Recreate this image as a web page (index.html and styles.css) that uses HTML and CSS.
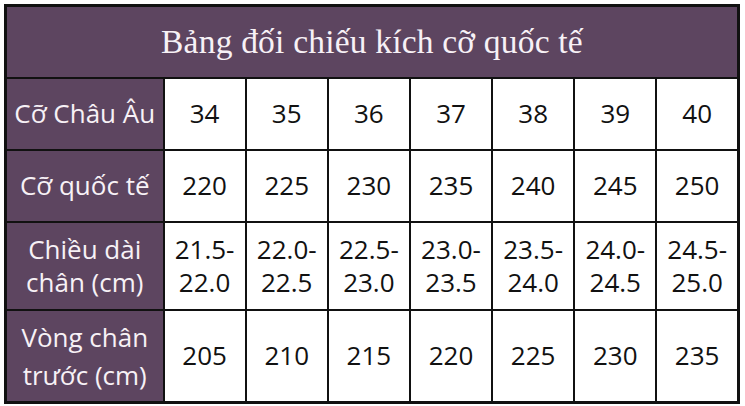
FILE: index.html
```html
<!DOCTYPE html>
<html lang="vi">
<head>
<meta charset="utf-8">
<title>Bảng đối chiếu kích cỡ quốc tế</title>
<link rel="stylesheet" href="styles.css">
</head>
<body>
<table class="size-table">
  <colgroup>
    <col class="col-head">
    <col><col><col><col><col><col><col>
  </colgroup>
  <tr class="row-title">
    <th colspan="8" class="title">Bảng đối chiếu kích cỡ quốc tế</th>
  </tr>
  <tr class="row-a">
    <th>Cỡ Châu Âu</th>
    <td>34</td><td>35</td><td>36</td><td>37</td><td>38</td><td>39</td><td>40</td>
  </tr>
  <tr class="row-a">
    <th>Cỡ quốc tế</th>
    <td>220</td><td>225</td><td>230</td><td>235</td><td>240</td><td>245</td><td>250</td>
  </tr>
  <tr class="row-b">
    <th>Chiều dài<br>chân (cm)</th>
    <td>21.5-<br>22.0</td><td>22.0-<br>22.5</td><td>22.5-<br>23.0</td><td>23.0-<br>23.5</td><td>23.5-<br>24.0</td><td>24.0-<br>24.5</td><td>24.5-<br>25.0</td>
  </tr>
  <tr class="row-c">
    <th>Vòng chân<br>trước (cm)</th>
    <td>205</td><td>210</td><td>215</td><td>220</td><td>225</td><td>230</td><td>235</td>
  </tr>
</table>
</body>
</html>
```
FILE: styles.css
```css
html, body {
  margin: 0;
  padding: 0;
  background: #ffffff;
}

.size-table {
  margin: 4px 0 0 4px;
  width: 736px;
  table-layout: fixed;
  border-collapse: collapse;
  border: 3px solid #111;
  font-family: "Open Sans", "Noto Sans", sans-serif;
  font-size: 26px;
  line-height: 33px;
  color: #111;
}

.col-head {
  width: 158px;
}

.size-table th,
.size-table td {
  border: 2px solid #111;
  padding: 0;
  text-align: center;
  vertical-align: middle;
}

.size-table th {
  background: #5d4560;
  color: #f7f1f6;
  font-weight: normal;
}

.size-table td {
  background: #ffffff;
}

.title {
  font-family: "Liberation Serif", "Times New Roman", serif;
  font-size: 33.5px;
  letter-spacing: 0.2px;
}

.row-title { height: 72px; }
.row-a { height: 72px; }
.row-b { height: 88px; }
.row-c { height: 93px; }
.row-c th { line-height: 38px; }
```
